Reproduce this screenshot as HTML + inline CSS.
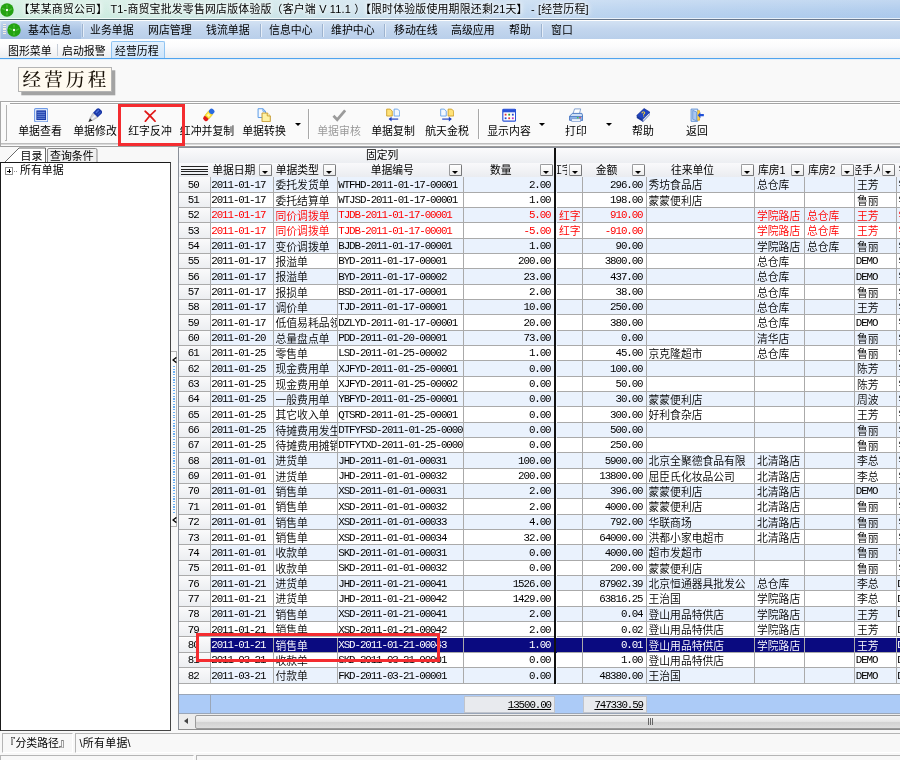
<!DOCTYPE html>
<html lang="zh-CN">
<head>
<meta charset="utf-8">
<title>经营历程</title>
<style>
*{box-sizing:border-box;margin:0;padding:0}
html,body{width:900px;height:760px;overflow:hidden}
html{background:#f8f8f8}
body{will-change:transform}
body{position:relative;background:#f8f8f8;font-family:"Liberation Sans","Noto Sans CJK SC",sans-serif;font-size:10.8px;color:#000;line-height:1}
.abs{position:absolute}
/* title bar */
#title{left:0;top:0;width:900px;height:19.5px;background:linear-gradient(180deg,rgba(255,255,255,.3) 0,rgba(255,255,255,.12) 50%,rgba(255,255,255,0) 100%),linear-gradient(90deg,#cdeedd 0,#cbe8e2 22%,#c8def0 45%,#b4cfee 70%,#a8c7eb 100%)}
#title .txt{position:absolute;left:18.5px;top:4px;white-space:nowrap;font-size:10.9px;letter-spacing:0.2px;text-shadow:0 0 4px #fff,0 0 6px rgba(255,255,255,.9),0 0 8px rgba(255,255,255,.7)}
#titleline{left:0;top:19px;width:900px;height:1px;background:linear-gradient(90deg,#3d5a58,#5d6f86 40%,#6b7a90);box-shadow:0 -1px 0 rgba(255,255,255,.7),0 1px 0 rgba(255,255,255,.8)}
/* menu */
#menu{left:0;top:20.5px;width:900px;height:18.5px;background:linear-gradient(180deg,#d3e2f3 0,#c3d6ee 45%,#b9cfea 100%)}
#menu .first{position:absolute;left:1px;top:0;width:80px;height:19px;background:linear-gradient(180deg,#c5d8ef 0,#a9c3e4 50%,#9dbae0 100%);border-radius:2px}
#menu span.mi{position:absolute;top:4.5px;white-space:nowrap;font-size:10.9px}
#menu i.sep{position:absolute;top:3px;width:1px;height:13px;background:#9db3cf;box-shadow:1px 0 0 #e6eef8}
/* tabs */
#tabs{left:0;top:39px;width:900px;height:20px;background:linear-gradient(180deg,#ffffff 0,#fbfbfc 40%,#eaecef 100%)}
#tabs span.t{position:absolute;top:7px;white-space:nowrap;font-size:10.9px}
#tabs .act{position:absolute;left:111px;top:2px;width:54px;height:18px;background:linear-gradient(180deg,#e4f1fd,#cbe3fa);border:1px solid #8fc4f2;border-bottom:none;border-radius:2px 2px 0 0}
#tabs i.sep{position:absolute;top:5px;width:1px;height:12px;background:#c5ccd6}
#tabline{left:0;top:58px;width:900px;height:1px;background:#4fa3ee;box-shadow:0 1px 0 #e4f0fb}
#white{left:0;top:59.5px;width:900px;height:41px;background:#f9f9f9}
/* heading label */
#hd{left:18px;top:67px;width:94px;height:24.5px;background:#fffaf0;border:1px solid #b4b4b4;box-shadow:3.3px 3.3px 0 #a3a3a3;font-family:"Liberation Serif","Noto Serif CJK SC",serif;font-weight:500;font-size:18.5px;letter-spacing:3.25px;white-space:nowrap;padding:2px 0 0 3.5px;line-height:20px;color:#1a1208}
/* toolbar */
#tb{left:0;top:101px;width:900px;height:45.5px;background:#fafafa;border-top:1px solid #a8a8a8;border-left:1px solid #a8a8a8;border-bottom:1px solid #9c9c9c;box-shadow:inset 0 1px 0 #fff}
#tbin{left:10px;top:103px;width:890px;height:1px;background:#a4a4a4;box-shadow:0 1px 0 #fff}
#tbbot{left:1px;top:143px;width:900px;height:1px;background:#bdbdbd;box-shadow:0 1px 0 #d9d9d9}
#grip{left:4.5px;top:105px;width:2.5px;height:36px;border-right:1.5px solid #b0b0b0;border-bottom:1px solid #b0b0b0}
.btn{position:absolute;top:105px;width:60px;height:38px;text-align:center;white-space:nowrap}
.btn svg{position:absolute;left:50%;top:2.5px;margin-left:-7.2px;width:14.4px;height:14.4px}
.btn em{position:absolute;left:-10px;right:-10px;top:20.5px;font-style:normal;font-size:10.9px;text-align:center}
.btn.dis em{color:#9a9a9a}
.tsep{position:absolute;top:109px;width:1px;height:30px;background:#a8a8a8;box-shadow:1px 0 0 #fff}
.arr{position:absolute;top:122.5px;width:0;height:0;border-left:3px solid transparent;border-right:3px solid transparent;border-top:3px solid #000}
#redbox1{left:118.25px;top:103.75px;width:66.75px;height:41.75px;border:3px solid #f42c30}
/* left panel */
#ltab1{left:18px;top:147px;width:29px;height:15px}
#lt1{left:20.5px;top:151px;font-size:10.9px}
#lt2{left:50px;top:151px;font-size:10.9px}
#tree{left:0;top:161.5px;width:170.5px;height:569px;background:#fff;border:1px solid #1a1a1a;border-right:1px solid #444;border-bottom:1px solid #444}
#plus{left:5px;top:167px;width:8px;height:8px;border:1px solid #909090;background:#fff}
#plus:before{content:"";position:absolute;left:1px;top:2.5px;width:4px;height:1px;background:#000}
#plus:after{content:"";position:absolute;left:2.5px;top:1px;width:1px;height:4px;background:#000}
#treetxt{left:20px;top:165.2px;font-size:10.9px}
/* splitter */
.sp{position:absolute;left:172px;font-size:9px;font-weight:bold;font-family:"Liberation Sans",sans-serif}
#spbtn{left:170.5px;top:350.5px;width:6.5px;height:176px;background:#fbfbfb;border-top:1px solid #b4b4b4;border-right:1px solid #b4b4b4;border-bottom:1px solid #b4b4b4}
#spbtn .dots{position:absolute;left:2.5px;top:14px;width:2px;height:148.5px;background:repeating-linear-gradient(180deg,#6ab0f5 0,#6ab0f5 1.2px,transparent 1.2px,transparent 2.7px)}
/* grid */
#grid{left:178px;top:147px;width:722px;height:583px;background:#fff;overflow:hidden;border-top:1px solid #8a8f98;border-left:1px solid #8a8f98;border-bottom:1px solid #8c8c8c}
#gh1{position:absolute;left:0;top:0;width:722px;height:15px;background:linear-gradient(180deg,#fbfbfc,#eceef2)}
#gh2{position:absolute;left:0;top:15px;width:722px;height:15px;background:linear-gradient(180deg,#f9f9fb,#e9ebef)}
#gh1 .fix{position:absolute;left:187px;top:1.5px;font-size:10.8px}
.h{position:absolute;top:15px;height:15px;font-size:10.8px;white-space:nowrap;overflow:hidden}
.h b{font-weight:normal;position:absolute;top:0;left:0;right:16.5px;height:15px;overflow:hidden;display:flex;justify-content:center}
.h b u{text-decoration:none;flex:none;padding-top:1.5px}
.h i.dd{position:absolute;right:1.5px;top:1px;width:13px;height:11.5px;border:1px solid #9a9b9d;border-right-color:#77787a;border-bottom-color:#77787a;border-radius:1.5px;background:linear-gradient(180deg,#ffffff,#ececec)}
.h i.dd:after{content:"";position:absolute;left:2.2px;top:6px;border-left:3.25px solid transparent;border-right:3.25px solid transparent;border-top:3.5px solid #000}
.h i.bars{position:absolute;left:2px;top:2.5px;width:27px;height:9px;background:repeating-linear-gradient(180deg,#222 0,#222 1.2px,transparent 1.2px,transparent 2.5px)}
.r{position:absolute;left:0;width:760px;height:15.34px;background:#fff}
.r.alt{background:#eaf2fd}
.r.red{color:#ff0000}
.r.sel{background:#0a0a80;color:#fff}
.c{position:absolute;top:0;height:15.34px;border-right:1px solid #aaa;border-bottom:1px solid #aaa;white-space:nowrap;overflow:hidden;padding:2px 0 0 2px;font-family:"Noto Sans CJK SC",sans-serif;font-weight:350;font-size:10.8px;line-height:11px}
.c.m{font-family:"Liberation Mono",monospace;letter-spacing:-1.08px;padding-top:2.4px;padding-left:0.8px}
.c.num{text-align:right;padding-right:3px}
.c.rn{text-align:center;background:linear-gradient(180deg,#fafafb,#eceef1);color:#000;padding-left:0;padding-right:2px}
#thick{position:absolute;left:375px;top:0;width:2px;height:535.5px;background:#111}
#foot{position:absolute;left:0;top:546px;width:722px;height:20px;background:#accbf7;border-top:1px solid #9aa6b8;border-bottom:1px solid #9aa6b8}
#foot .fb{position:absolute;top:1px;height:17px;background:#e8eaee;border:1px solid #c0c4cc;font-family:"Liberation Mono",monospace;letter-spacing:-1.08px;font-size:10.8px;text-align:right;padding:3px 3px 0 0;text-decoration:underline}
#foot i{position:absolute;top:0;width:1px;height:19px;background:#9aa6b8}
#hs{position:absolute;left:0;top:566px;width:722px;height:15px;background:#ececec}
#hs .thumb{position:absolute;left:16px;top:1px;width:720px;height:14px;border:1px solid #9a9a9a;border-radius:2px;background:linear-gradient(180deg,#f4f4f4 0,#e6e6e6 45%,#d2d2d2 55%,#dedede 100%)}
#hs .la{position:absolute;left:5px;top:4px;border-top:3.5px solid transparent;border-bottom:3.5px solid transparent;border-right:4px solid #444}
#hs .gr{position:absolute;left:469px;top:4px;width:5px;height:7px;background:repeating-linear-gradient(90deg,#666 0,#666 1px,transparent 1px,transparent 2px)}
#redbox2{left:196px;top:633px;width:244px;height:29px;border:3px solid #f42c30}
/* status */
#st1{left:2px;top:732.5px;width:71px;height:20px;border:1px solid #fff;border-left-color:#b5b5b5;border-top-color:#b5b5b5;background:#f8f8f8}
#st2{left:75px;top:732.5px;width:830px;height:20px;border:1px solid #fff;border-left-color:#b5b5b5;border-top-color:#b5b5b5;background:#f8f8f8}
#st1 span,#st2 span{position:absolute;top:4.5px;font-size:10.9px;white-space:nowrap}
#sb1{left:0;top:754.5px;width:194px;height:8px;border:1px solid #b5b5b5;border-right-color:#fff;background:#f8f8f8}
#sb2{left:196px;top:754.5px;width:710px;height:8px;border:1px solid #b5b5b5;background:#f8f8f8}
</style>
</head>
<body>
<div id="title" class="abs">
<svg class="abs" style="left:0.3px;top:3px" width="14" height="14" viewBox="0 0 14 14"><circle cx="7" cy="7" r="6.7" fill="#24a212"/><g stroke="#48c034" stroke-width="1.3" stroke-linecap="round"><line x1="7" y1="2.2" x2="7" y2="4.2"/><line x1="7" y1="9.8" x2="7" y2="11.8"/><line x1="2.6" y1="5.6" x2="4.6" y2="6.6"/><line x1="9.4" y1="7.4" x2="11.4" y2="6"/></g><circle cx="7" cy="7" r="1.2" fill="#f4fff0"/></svg>
<span class="txt">【某某商贸公司】 T1-商贸宝批发零售网店版体验版（客户端 V 11.1 ）【限时体验版使用期限还剩21天】 - [经营历程]</span>
</div>
<div id="titleline" class="abs"></div>
<div id="menu" class="abs">
<div class="first"></div>
<svg class="abs" style="left:7.3px;top:2px" width="14" height="14" viewBox="0 0 14 14"><circle cx="7" cy="7" r="6.7" fill="#24a212"/><g stroke="#48c034" stroke-width="1.3" stroke-linecap="round"><line x1="7" y1="2.2" x2="7" y2="4.2"/><line x1="7" y1="9.8" x2="7" y2="11.8"/><line x1="2.6" y1="5.6" x2="4.6" y2="6.6"/><line x1="9.4" y1="7.4" x2="11.4" y2="6"/></g><circle cx="7" cy="7" r="1.2" fill="#f4fff0"/></svg>
<i class="abs" style="left:3px;top:3.5px;width:2.5px;height:11px;background:repeating-linear-gradient(180deg,#f3efe6 0,#f3efe6 1.3px,#a9bfdc 1.3px,#a9bfdc 2.2px)"></i>
<span class="mi" style="left:28px">基本信息</span>
<span class="mi" style="left:90px">业务单据</span>
<span class="mi" style="left:148px">网店管理</span>
<span class="mi" style="left:206px">钱流单据</span>
<span class="mi" style="left:269px">信息中心</span>
<span class="mi" style="left:331px">维护中心</span>
<span class="mi" style="left:394px">移动在线</span>
<span class="mi" style="left:451px">高级应用</span>
<span class="mi" style="left:509px">帮助</span>
<span class="mi" style="left:551px">窗口</span>
<i class="sep" style="left:82px"></i><i class="sep" style="left:260px"></i><i class="sep" style="left:322px"></i><i class="sep" style="left:384px"></i><i class="sep" style="left:541px"></i>
</div>
<div id="tabs" class="abs">
<div class="act"></div>
<span class="t" style="left:8px">图形菜单</span><i class="sep" style="left:57px"></i>
<span class="t" style="left:62px">启动报警</span>
<span class="t" style="left:115px">经营历程</span>
</div>
<div id="tabline" class="abs"></div>
<div id="white" class="abs"></div>
<div id="hd" class="abs">经营历程</div>

<div id="tb" class="abs"></div>
<div id="tbin" class="abs"></div>
<div id="tbbot" class="abs"></div>
<div id="grip" class="abs"></div>
<!--BTNS--><div class="btn" style="left:10px"><svg viewBox="0 0 16 16" style="margin-left:-6.4px"><rect x="0.7" y="0.7" width="14.6" height="14.6" rx="1.2" fill="#f4f8ff" stroke="#6f9ae6" stroke-width="1.3"/><rect x="2.6" y="2.6" width="10.8" height="10.8" fill="#1a3aa8"/><g stroke="#7f9fe8" stroke-width="0.9"><line x1="3.6" y1="4.8" x2="12.4" y2="4.8"/><line x1="3.6" y1="7" x2="12.4" y2="7"/><line x1="3.6" y1="9.2" x2="12.4" y2="9.2"/><line x1="3.6" y1="11.4" x2="12.4" y2="11.4"/></g></svg><em>单据查看</em></div>
<div class="btn" style="left:65px"><svg viewBox="0 0 16 16"><path d="M0.4 15.8 L2.2 11.2 L5 13.8 Z" fill="#2a2a2a"/><path d="M2.2 11.2 L5.6 5.4 L10.8 10.4 L5 13.8 Z" fill="#d4d4d8" stroke="#8c8c96" stroke-width="0.5"/><path d="M3.4 12.2 L7.6 7.4 L9 8.8 L4.4 13.2 Z" fill="#f4f4f6"/><path d="M5.6 5.4 L9.8 0.9 Q11.4 -0.4 13.2 1 L15.2 3 Q16.6 4.8 15 6.4 L10.8 10.4 Z" fill="#1936a6"/><path d="M8.2 4.8 L11.4 1.6 L12.6 2.8 L9.4 6 Z" fill="#4a6fd8"/><path d="M10.4 7 L13.6 3.8 L14.4 4.6 L11.2 7.8 Z" fill="#3558c4"/></svg><em>单据修改</em></div>
<div class="btn" style="left:120px"><svg viewBox="0 0 16 16"><path d="M2.4 3.6 Q7 7.4 13.4 14.8" stroke="#e01818" stroke-width="1.9" stroke-linecap="round" fill="none"/><path d="M13.6 3 Q7.6 8 2.6 14.8" stroke="#e01818" stroke-width="1.9" stroke-linecap="round" fill="none"/></svg><em>红字反冲</em></div>
<div class="btn" style="left:177px"><svg viewBox="0 0 16 16" style="margin-left:-5.4px"><g transform="rotate(-50 8 8) translate(0 0.4) scale(1 0.88)"><rect x="0.2" y="4.6" width="5.6" height="6.8" rx="2.6" fill="#e01818"/><rect x="4.6" y="4.6" width="6.6" height="6.8" fill="#ffe53a" stroke="#c9a800" stroke-width="0.5"/><rect x="10.2" y="4.6" width="5.6" height="6.8" rx="2.6" fill="#2a6ae0"/><rect x="6.2" y="6.4" width="2.6" height="3.2" fill="#fff8b0"/></g></svg><em>红冲并复制</em></div>
<div class="btn" style="left:234px"><svg viewBox="0 0 16 16"><path d="M1.2 0.8 H6.6 L9.4 3.6 V10.6 H1.2 Z" fill="#f4f9ff" stroke="#5b9be6" stroke-width="1.1"/><path d="M6.6 0.8 V3.6 H9.4" fill="none" stroke="#5b9be6" stroke-width="1"/><path d="M5.6 5.6 H11.4 L14.8 8.8 V15.2 H5.6 Z" fill="#fff2a4" stroke="#c49a34" stroke-width="1.1"/><path d="M11.4 5.6 V8.8 H14.8" fill="#fff6c8" stroke="#c89a20" stroke-width="1"/></svg><em>单据转换</em></div>
<div class="btn dis" style="left:309px"><svg viewBox="0 0 16 16"><path d="M1.6 8.6 L5.8 13 L14.6 2.6" stroke="#9b9b9b" stroke-width="3" fill="none" stroke-linejoin="miter"/></svg><em>单据审核</em></div>
<div class="btn" style="left:363px"><svg viewBox="0 0 17 16"><path d="M0.8 0.8 H5 L7.4 3.2 V9 H0.8 Z" fill="#ffe27a" stroke="#c89a20" stroke-width="1"/><path d="M9.6 0.8 H13.8 L16.2 3.2 V9 H9.6 Z" fill="#f4f9ff" stroke="#5b9be6" stroke-width="1"/><path d="M14.4 12.6 H4.6" stroke="#1c3fc0" stroke-width="1.4" fill="none"/><path d="M6.6 9.8 L3 12.6 L6.6 15.4 Z" fill="#1c3fc0"/></svg><em>单据复制</em></div>
<div class="btn" style="left:417px"><svg viewBox="0 0 17 16"><path d="M0.8 0.8 H5 L7.4 3.2 V9 H0.8 Z" fill="#f4f9ff" stroke="#5b9be6" stroke-width="1"/><path d="M9.6 0.8 H13.8 L16.2 3.2 V9 H9.6 Z" fill="#ffe27a" stroke="#c89a20" stroke-width="1"/><path d="M2.6 12.6 H12.4" stroke="#1c3fc0" stroke-width="1.4" fill="none"/><path d="M10.4 9.8 L14 12.6 L10.4 15.4 Z" fill="#1c3fc0"/></svg><em>航天金税</em></div>
<div class="btn" style="left:479px"><svg viewBox="0 0 16 16"><rect x="0.9" y="1.4" width="14.2" height="13.2" rx="1" fill="#fff" stroke="#2a52d8" stroke-width="1.3"/><rect x="0.9" y="1.4" width="14.2" height="3.4" fill="#2a52d8"/><g><rect x="3" y="6.4" width="2" height="2" fill="#d33"/><rect x="7" y="6.4" width="2" height="2" fill="#2a9a2a"/><rect x="11" y="6.4" width="2" height="2" fill="#24c"/><rect x="3" y="10.4" width="2" height="2" fill="#24c"/><rect x="7" y="10.4" width="2" height="2" fill="#d33"/><rect x="11" y="10.4" width="2" height="2" fill="#b3b"/></g></svg><em>显示内容</em></div>
<div class="btn" style="left:546px"><svg viewBox="0 0 16 16"><path d="M4.4 6.4 L6.2 1 H13 L11.6 6.4 Z" fill="#fff" stroke="#6b8fc9" stroke-width="0.9"/><path d="M0.8 9 L3.6 6 H14.4 L15.2 9 V13.4 H0.8 Z" fill="#cfe0f6" stroke="#4a78c2" stroke-width="1"/><rect x="0.8" y="9.4" width="14.4" height="4.2" fill="#8fb2e6" stroke="#4a78c2" stroke-width="0.9"/><rect x="3" y="12" width="10" height="3" fill="#eef4fc" stroke="#6b8fc9" stroke-width="0.7"/><rect x="11.4" y="10.2" width="1.8" height="1.2" fill="#e33"/><rect x="8.8" y="10.2" width="1.8" height="1.2" fill="#3c3"/></svg><em>打印</em></div>
<div class="btn" style="left:613px"><svg viewBox="0 0 16 16"><path d="M0.8 8.4 L9 0.6 L15.4 4.6 L7.6 12.6 Z" fill="#1f44c4" stroke="#0f2a8a" stroke-width="0.8"/><path d="M0.8 8.4 V11 L7.6 15.4 V12.6 Z" fill="#16349c"/><path d="M7.6 12.6 L15.4 4.6 V7.2 L7.6 15.4 Z" fill="#dfe6f6" stroke="#0f2a8a" stroke-width="0.6"/><text x="6.2" y="9.6" font-family="Liberation Sans,sans-serif" font-size="8" font-weight="bold" fill="#ffd92a" transform="rotate(-8 8 8)">?</text></svg><em>帮助</em></div>
<div class="btn" style="left:667px"><svg viewBox="0 0 16 16"><path d="M1.2 1.2 H8.6 V14.8 H1.2 Z" fill="#dce9fb" stroke="#5588d0" stroke-width="1"/><path d="M3 2.6 L7.4 4.4 V14.2 L3 12.6 Z" fill="#a9c6f0" stroke="#5588d0" stroke-width="0.8"/><path d="M8.2 3 H10.6 V13.6 H8.2" fill="#ffcf40" stroke="#d89a10" stroke-width="0.7"/><path d="M15.4 6.8 H11.6 V4.6 L8.6 8 L11.6 11.4 V9.2 H15.4 Z" fill="#1f50d8"/></svg><em>返回</em></div>
<i class="arr" style="left:295px"></i><i class="arr" style="left:539px"></i><i class="arr" style="left:606px"></i>
<i class="tsep" style="left:308px"></i><i class="tsep" style="left:477.5px"></i>
<!--/BTNS-->
<div id="redbox1" class="abs"></div>

<svg class="abs" style="left:0;top:146px" width="110" height="17" viewBox="0 0 110 17"><path d="M47.5 16.5 V4 Q47.5 2.5 49 2.5 H95.5 Q97 2.5 97 4 V16.5 Z" fill="#f0f0f0" stroke="#8a8a8a" stroke-width="1"/><path d="M5 16 L19 2 H45.5 V16.5 Z" fill="#fff"/><path d="M5 16 L19 2 H45.5 V16.5" fill="none" stroke="#6a6a6a" stroke-width="1"/></svg>
<div id="lt1" class="abs">目录</div>
<div id="lt2" class="abs">查询条件</div>
<div id="tree" class="abs"></div>
<div id="plus" class="abs"></div>
<i class="abs" style="left:14px;top:171px;width:4px;height:1px;background:repeating-linear-gradient(90deg,#909090 0,#909090 1px,transparent 1px,transparent 2px)"></i>
<div id="treetxt" class="abs">所有单据</div>
<div id="spbtn" class="abs"><svg class="abs" style="left:1px;top:5px" width="5" height="6" viewBox="0 0 5 6"><path d="M4.4 0.4 L1 3 L4.4 5.6" fill="none" stroke="#000" stroke-width="1.3"/></svg><i class="dots"></i><svg class="abs" style="left:1px;top:165px" width="5" height="6" viewBox="0 0 5 6"><path d="M4.4 0.4 L1 3 L4.4 5.6" fill="none" stroke="#000" stroke-width="1.3"/></svg></div>

<div id="grid" class="abs">
<div id="gh1"><span class="fix">固定列</span></div>
<div id="gh2"></div>
<span class="h" style="left:0.0px;width:31.5px"><i class="bars"></i></span>
<span class="h" style="left:31.5px;width:63.0px"><b><u>单据日期</u></b><i class="dd"></i></span>
<span class="h" style="left:94.5px;width:64.0px"><b><u>单据类型</u></b><i class="dd"></i></span>
<span class="h" style="left:158.5px;width:126.0px"><b><u>单据编号</u></b><i class="dd"></i></span>
<span class="h" style="left:284.5px;width:91.0px"><b><u>数量</u></b><i class="dd"></i></span>
<span class="h" style="left:378.0px;width:26.0px"><b><u>红字</u></b><i class="dd"></i></span>
<span class="h" style="left:404.0px;width:63.5px"><b><u>金额</u></b><i class="dd"></i></span>
<span class="h" style="left:467.5px;width:108.5px"><b><u>往来单位</u></b><i class="dd"></i></span>
<span class="h" style="left:576.0px;width:50.0px"><b><u>库房1</u></b><i class="dd"></i></span>
<span class="h" style="left:626.0px;width:50.0px"><b><u>库房2</u></b><i class="dd"></i></span>
<span class="h" style="left:676.0px;width:41.5px"><b><u>经手人</u></b><i class="dd"></i></span>
<span class="h" style="left:717.5px;width:64.0px"><b><u>销售部门</u></b><i class="dd"></i></span>
<div class="r alt" style="top:29.30px">
<span class="c rn m" style="left:0.0px;width:31.5px">50</span>
<span class="c m" style="left:31.5px;width:63.0px">2011-01-17</span>
<span class="c" style="left:94.5px;width:64.0px">委托发货单</span>
<span class="c m" style="left:158.5px;width:126.0px">WTFHD-2011-01-17-00001</span>
<span class="c num m" style="left:284.5px;width:91.0px">2.00</span>
<span class="c" style="left:378.0px;width:26.0px"></span>
<span class="c num m" style="left:404.0px;width:63.5px">296.00</span>
<span class="c" style="left:467.5px;width:108.5px">秀坊食品店</span>
<span class="c" style="left:576.0px;width:50.0px">总仓库</span>
<span class="c" style="left:626.0px;width:50.0px"></span>
<span class="c" style="left:676.0px;width:41.5px">王芳</span>
<span class="c" style="left:717.5px;width:64.0px">销</span>
</div>
<div class="r" style="top:44.64px">
<span class="c rn m" style="left:0.0px;width:31.5px">51</span>
<span class="c m" style="left:31.5px;width:63.0px">2011-01-17</span>
<span class="c" style="left:94.5px;width:64.0px">委托结算单</span>
<span class="c m" style="left:158.5px;width:126.0px">WTJSD-2011-01-17-00001</span>
<span class="c num m" style="left:284.5px;width:91.0px">1.00</span>
<span class="c" style="left:378.0px;width:26.0px"></span>
<span class="c num m" style="left:404.0px;width:63.5px">198.00</span>
<span class="c" style="left:467.5px;width:108.5px">蒙蒙便利店</span>
<span class="c" style="left:576.0px;width:50.0px"></span>
<span class="c" style="left:626.0px;width:50.0px"></span>
<span class="c" style="left:676.0px;width:41.5px">鲁丽</span>
<span class="c" style="left:717.5px;width:64.0px">销</span>
</div>
<div class="r alt red" style="top:59.98px">
<span class="c rn m" style="left:0.0px;width:31.5px">52</span>
<span class="c m" style="left:31.5px;width:63.0px">2011-01-17</span>
<span class="c" style="left:94.5px;width:64.0px">同价调拨单</span>
<span class="c m" style="left:158.5px;width:126.0px">TJDB-2011-01-17-00001</span>
<span class="c num m" style="left:284.5px;width:91.0px">5.00</span>
<span class="c" style="left:378.0px;width:26.0px">红字</span>
<span class="c num m" style="left:404.0px;width:63.5px">910.00</span>
<span class="c" style="left:467.5px;width:108.5px"></span>
<span class="c" style="left:576.0px;width:50.0px">学院路店</span>
<span class="c" style="left:626.0px;width:50.0px">总仓库</span>
<span class="c" style="left:676.0px;width:41.5px">王芳</span>
<span class="c" style="left:717.5px;width:64.0px">销</span>
</div>
<div class="r red" style="top:75.32px">
<span class="c rn m" style="left:0.0px;width:31.5px">53</span>
<span class="c m" style="left:31.5px;width:63.0px">2011-01-17</span>
<span class="c" style="left:94.5px;width:64.0px">同价调拨单</span>
<span class="c m" style="left:158.5px;width:126.0px">TJDB-2011-01-17-00001</span>
<span class="c num m" style="left:284.5px;width:91.0px">-5.00</span>
<span class="c" style="left:378.0px;width:26.0px">红字</span>
<span class="c num m" style="left:404.0px;width:63.5px">-910.00</span>
<span class="c" style="left:467.5px;width:108.5px"></span>
<span class="c" style="left:576.0px;width:50.0px">学院路店</span>
<span class="c" style="left:626.0px;width:50.0px">总仓库</span>
<span class="c" style="left:676.0px;width:41.5px">王芳</span>
<span class="c" style="left:717.5px;width:64.0px">销</span>
</div>
<div class="r alt" style="top:90.66px">
<span class="c rn m" style="left:0.0px;width:31.5px">54</span>
<span class="c m" style="left:31.5px;width:63.0px">2011-01-17</span>
<span class="c" style="left:94.5px;width:64.0px">变价调拨单</span>
<span class="c m" style="left:158.5px;width:126.0px">BJDB-2011-01-17-00001</span>
<span class="c num m" style="left:284.5px;width:91.0px">1.00</span>
<span class="c" style="left:378.0px;width:26.0px"></span>
<span class="c num m" style="left:404.0px;width:63.5px">90.00</span>
<span class="c" style="left:467.5px;width:108.5px"></span>
<span class="c" style="left:576.0px;width:50.0px">学院路店</span>
<span class="c" style="left:626.0px;width:50.0px">总仓库</span>
<span class="c" style="left:676.0px;width:41.5px">鲁丽</span>
<span class="c" style="left:717.5px;width:64.0px">销</span>
</div>
<div class="r" style="top:106.00px">
<span class="c rn m" style="left:0.0px;width:31.5px">55</span>
<span class="c m" style="left:31.5px;width:63.0px">2011-01-17</span>
<span class="c" style="left:94.5px;width:64.0px">报溢单</span>
<span class="c m" style="left:158.5px;width:126.0px">BYD-2011-01-17-00001</span>
<span class="c num m" style="left:284.5px;width:91.0px">200.00</span>
<span class="c" style="left:378.0px;width:26.0px"></span>
<span class="c num m" style="left:404.0px;width:63.5px">3800.00</span>
<span class="c" style="left:467.5px;width:108.5px"></span>
<span class="c" style="left:576.0px;width:50.0px">总仓库</span>
<span class="c" style="left:626.0px;width:50.0px"></span>
<span class="c m" style="left:676.0px;width:41.5px">DEMO</span>
<span class="c" style="left:717.5px;width:64.0px">销</span>
</div>
<div class="r alt" style="top:121.34px">
<span class="c rn m" style="left:0.0px;width:31.5px">56</span>
<span class="c m" style="left:31.5px;width:63.0px">2011-01-17</span>
<span class="c" style="left:94.5px;width:64.0px">报溢单</span>
<span class="c m" style="left:158.5px;width:126.0px">BYD-2011-01-17-00002</span>
<span class="c num m" style="left:284.5px;width:91.0px">23.00</span>
<span class="c" style="left:378.0px;width:26.0px"></span>
<span class="c num m" style="left:404.0px;width:63.5px">437.00</span>
<span class="c" style="left:467.5px;width:108.5px"></span>
<span class="c" style="left:576.0px;width:50.0px">总仓库</span>
<span class="c" style="left:626.0px;width:50.0px"></span>
<span class="c m" style="left:676.0px;width:41.5px">DEMO</span>
<span class="c" style="left:717.5px;width:64.0px">销</span>
</div>
<div class="r" style="top:136.68px">
<span class="c rn m" style="left:0.0px;width:31.5px">57</span>
<span class="c m" style="left:31.5px;width:63.0px">2011-01-17</span>
<span class="c" style="left:94.5px;width:64.0px">报损单</span>
<span class="c m" style="left:158.5px;width:126.0px">BSD-2011-01-17-00001</span>
<span class="c num m" style="left:284.5px;width:91.0px">2.00</span>
<span class="c" style="left:378.0px;width:26.0px"></span>
<span class="c num m" style="left:404.0px;width:63.5px">38.00</span>
<span class="c" style="left:467.5px;width:108.5px"></span>
<span class="c" style="left:576.0px;width:50.0px">总仓库</span>
<span class="c" style="left:626.0px;width:50.0px"></span>
<span class="c" style="left:676.0px;width:41.5px">鲁丽</span>
<span class="c" style="left:717.5px;width:64.0px">销</span>
</div>
<div class="r alt" style="top:152.02px">
<span class="c rn m" style="left:0.0px;width:31.5px">58</span>
<span class="c m" style="left:31.5px;width:63.0px">2011-01-17</span>
<span class="c" style="left:94.5px;width:64.0px">调价单</span>
<span class="c m" style="left:158.5px;width:126.0px">TJD-2011-01-17-00001</span>
<span class="c num m" style="left:284.5px;width:91.0px">10.00</span>
<span class="c" style="left:378.0px;width:26.0px"></span>
<span class="c num m" style="left:404.0px;width:63.5px">250.00</span>
<span class="c" style="left:467.5px;width:108.5px"></span>
<span class="c" style="left:576.0px;width:50.0px">总仓库</span>
<span class="c" style="left:626.0px;width:50.0px"></span>
<span class="c" style="left:676.0px;width:41.5px">王芳</span>
<span class="c" style="left:717.5px;width:64.0px">销</span>
</div>
<div class="r" style="top:167.36px">
<span class="c rn m" style="left:0.0px;width:31.5px">59</span>
<span class="c m" style="left:31.5px;width:63.0px">2011-01-17</span>
<span class="c" style="left:94.5px;width:64.0px">低值易耗品领用单</span>
<span class="c m" style="left:158.5px;width:126.0px">DZLYD-2011-01-17-00001</span>
<span class="c num m" style="left:284.5px;width:91.0px">20.00</span>
<span class="c" style="left:378.0px;width:26.0px"></span>
<span class="c num m" style="left:404.0px;width:63.5px">380.00</span>
<span class="c" style="left:467.5px;width:108.5px"></span>
<span class="c" style="left:576.0px;width:50.0px">总仓库</span>
<span class="c" style="left:626.0px;width:50.0px"></span>
<span class="c m" style="left:676.0px;width:41.5px">DEMO</span>
<span class="c" style="left:717.5px;width:64.0px">销</span>
</div>
<div class="r alt" style="top:182.70px">
<span class="c rn m" style="left:0.0px;width:31.5px">60</span>
<span class="c m" style="left:31.5px;width:63.0px">2011-01-20</span>
<span class="c" style="left:94.5px;width:64.0px">总量盘点单</span>
<span class="c m" style="left:158.5px;width:126.0px">PDD-2011-01-20-00001</span>
<span class="c num m" style="left:284.5px;width:91.0px">73.00</span>
<span class="c" style="left:378.0px;width:26.0px"></span>
<span class="c num m" style="left:404.0px;width:63.5px">0.00</span>
<span class="c" style="left:467.5px;width:108.5px"></span>
<span class="c" style="left:576.0px;width:50.0px">清华店</span>
<span class="c" style="left:626.0px;width:50.0px"></span>
<span class="c" style="left:676.0px;width:41.5px">鲁丽</span>
<span class="c" style="left:717.5px;width:64.0px">销</span>
</div>
<div class="r" style="top:198.04px">
<span class="c rn m" style="left:0.0px;width:31.5px">61</span>
<span class="c m" style="left:31.5px;width:63.0px">2011-01-25</span>
<span class="c" style="left:94.5px;width:64.0px">零售单</span>
<span class="c m" style="left:158.5px;width:126.0px">LSD-2011-01-25-00002</span>
<span class="c num m" style="left:284.5px;width:91.0px">1.00</span>
<span class="c" style="left:378.0px;width:26.0px"></span>
<span class="c num m" style="left:404.0px;width:63.5px">45.00</span>
<span class="c" style="left:467.5px;width:108.5px">京克隆超市</span>
<span class="c" style="left:576.0px;width:50.0px">总仓库</span>
<span class="c" style="left:626.0px;width:50.0px"></span>
<span class="c" style="left:676.0px;width:41.5px">鲁丽</span>
<span class="c" style="left:717.5px;width:64.0px">销</span>
</div>
<div class="r alt" style="top:213.38px">
<span class="c rn m" style="left:0.0px;width:31.5px">62</span>
<span class="c m" style="left:31.5px;width:63.0px">2011-01-25</span>
<span class="c" style="left:94.5px;width:64.0px">现金费用单</span>
<span class="c m" style="left:158.5px;width:126.0px">XJFYD-2011-01-25-00001</span>
<span class="c num m" style="left:284.5px;width:91.0px">0.00</span>
<span class="c" style="left:378.0px;width:26.0px"></span>
<span class="c num m" style="left:404.0px;width:63.5px">100.00</span>
<span class="c" style="left:467.5px;width:108.5px"></span>
<span class="c" style="left:576.0px;width:50.0px"></span>
<span class="c" style="left:626.0px;width:50.0px"></span>
<span class="c" style="left:676.0px;width:41.5px">陈芳</span>
<span class="c" style="left:717.5px;width:64.0px">销</span>
</div>
<div class="r" style="top:228.72px">
<span class="c rn m" style="left:0.0px;width:31.5px">63</span>
<span class="c m" style="left:31.5px;width:63.0px">2011-01-25</span>
<span class="c" style="left:94.5px;width:64.0px">现金费用单</span>
<span class="c m" style="left:158.5px;width:126.0px">XJFYD-2011-01-25-00002</span>
<span class="c num m" style="left:284.5px;width:91.0px">0.00</span>
<span class="c" style="left:378.0px;width:26.0px"></span>
<span class="c num m" style="left:404.0px;width:63.5px">50.00</span>
<span class="c" style="left:467.5px;width:108.5px"></span>
<span class="c" style="left:576.0px;width:50.0px"></span>
<span class="c" style="left:626.0px;width:50.0px"></span>
<span class="c" style="left:676.0px;width:41.5px">陈芳</span>
<span class="c" style="left:717.5px;width:64.0px">销</span>
</div>
<div class="r alt" style="top:244.06px">
<span class="c rn m" style="left:0.0px;width:31.5px">64</span>
<span class="c m" style="left:31.5px;width:63.0px">2011-01-25</span>
<span class="c" style="left:94.5px;width:64.0px">一般费用单</span>
<span class="c m" style="left:158.5px;width:126.0px">YBFYD-2011-01-25-00001</span>
<span class="c num m" style="left:284.5px;width:91.0px">0.00</span>
<span class="c" style="left:378.0px;width:26.0px"></span>
<span class="c num m" style="left:404.0px;width:63.5px">30.00</span>
<span class="c" style="left:467.5px;width:108.5px">蒙蒙便利店</span>
<span class="c" style="left:576.0px;width:50.0px"></span>
<span class="c" style="left:626.0px;width:50.0px"></span>
<span class="c" style="left:676.0px;width:41.5px">周波</span>
<span class="c" style="left:717.5px;width:64.0px">销</span>
</div>
<div class="r" style="top:259.40px">
<span class="c rn m" style="left:0.0px;width:31.5px">65</span>
<span class="c m" style="left:31.5px;width:63.0px">2011-01-25</span>
<span class="c" style="left:94.5px;width:64.0px">其它收入单</span>
<span class="c m" style="left:158.5px;width:126.0px">QTSRD-2011-01-25-00001</span>
<span class="c num m" style="left:284.5px;width:91.0px">0.00</span>
<span class="c" style="left:378.0px;width:26.0px"></span>
<span class="c num m" style="left:404.0px;width:63.5px">300.00</span>
<span class="c" style="left:467.5px;width:108.5px">好利食杂店</span>
<span class="c" style="left:576.0px;width:50.0px"></span>
<span class="c" style="left:626.0px;width:50.0px"></span>
<span class="c" style="left:676.0px;width:41.5px">王芳</span>
<span class="c" style="left:717.5px;width:64.0px">销</span>
</div>
<div class="r alt" style="top:274.74px">
<span class="c rn m" style="left:0.0px;width:31.5px">66</span>
<span class="c m" style="left:31.5px;width:63.0px">2011-01-25</span>
<span class="c" style="left:94.5px;width:64.0px">待摊费用发生单</span>
<span class="c m" style="left:158.5px;width:126.0px">DTFYFSD-2011-01-25-00001</span>
<span class="c num m" style="left:284.5px;width:91.0px">0.00</span>
<span class="c" style="left:378.0px;width:26.0px"></span>
<span class="c num m" style="left:404.0px;width:63.5px">500.00</span>
<span class="c" style="left:467.5px;width:108.5px"></span>
<span class="c" style="left:576.0px;width:50.0px"></span>
<span class="c" style="left:626.0px;width:50.0px"></span>
<span class="c" style="left:676.0px;width:41.5px">鲁丽</span>
<span class="c" style="left:717.5px;width:64.0px">销</span>
</div>
<div class="r" style="top:290.08px">
<span class="c rn m" style="left:0.0px;width:31.5px">67</span>
<span class="c m" style="left:31.5px;width:63.0px">2011-01-25</span>
<span class="c" style="left:94.5px;width:64.0px">待摊费用摊销单</span>
<span class="c m" style="left:158.5px;width:126.0px">DTFYTXD-2011-01-25-00001</span>
<span class="c num m" style="left:284.5px;width:91.0px">0.00</span>
<span class="c" style="left:378.0px;width:26.0px"></span>
<span class="c num m" style="left:404.0px;width:63.5px">250.00</span>
<span class="c" style="left:467.5px;width:108.5px"></span>
<span class="c" style="left:576.0px;width:50.0px"></span>
<span class="c" style="left:626.0px;width:50.0px"></span>
<span class="c" style="left:676.0px;width:41.5px">鲁丽</span>
<span class="c" style="left:717.5px;width:64.0px">销</span>
</div>
<div class="r alt" style="top:305.42px">
<span class="c rn m" style="left:0.0px;width:31.5px">68</span>
<span class="c m" style="left:31.5px;width:63.0px">2011-01-01</span>
<span class="c" style="left:94.5px;width:64.0px">进货单</span>
<span class="c m" style="left:158.5px;width:126.0px">JHD-2011-01-01-00031</span>
<span class="c num m" style="left:284.5px;width:91.0px">100.00</span>
<span class="c" style="left:378.0px;width:26.0px"></span>
<span class="c num m" style="left:404.0px;width:63.5px">5900.00</span>
<span class="c" style="left:467.5px;width:108.5px">北京全聚德食品有限</span>
<span class="c" style="left:576.0px;width:50.0px">北清路店</span>
<span class="c" style="left:626.0px;width:50.0px"></span>
<span class="c" style="left:676.0px;width:41.5px">李总</span>
<span class="c" style="left:717.5px;width:64.0px">销</span>
</div>
<div class="r" style="top:320.76px">
<span class="c rn m" style="left:0.0px;width:31.5px">69</span>
<span class="c m" style="left:31.5px;width:63.0px">2011-01-01</span>
<span class="c" style="left:94.5px;width:64.0px">进货单</span>
<span class="c m" style="left:158.5px;width:126.0px">JHD-2011-01-01-00032</span>
<span class="c num m" style="left:284.5px;width:91.0px">200.00</span>
<span class="c" style="left:378.0px;width:26.0px"></span>
<span class="c num m" style="left:404.0px;width:63.5px">13800.00</span>
<span class="c" style="left:467.5px;width:108.5px">屈臣氏化妆品公司</span>
<span class="c" style="left:576.0px;width:50.0px">北清路店</span>
<span class="c" style="left:626.0px;width:50.0px"></span>
<span class="c" style="left:676.0px;width:41.5px">李总</span>
<span class="c" style="left:717.5px;width:64.0px">销</span>
</div>
<div class="r alt" style="top:336.10px">
<span class="c rn m" style="left:0.0px;width:31.5px">70</span>
<span class="c m" style="left:31.5px;width:63.0px">2011-01-01</span>
<span class="c" style="left:94.5px;width:64.0px">销售单</span>
<span class="c m" style="left:158.5px;width:126.0px">XSD-2011-01-01-00031</span>
<span class="c num m" style="left:284.5px;width:91.0px">2.00</span>
<span class="c" style="left:378.0px;width:26.0px"></span>
<span class="c num m" style="left:404.0px;width:63.5px">396.00</span>
<span class="c" style="left:467.5px;width:108.5px">蒙蒙便利店</span>
<span class="c" style="left:576.0px;width:50.0px">北清路店</span>
<span class="c" style="left:626.0px;width:50.0px"></span>
<span class="c m" style="left:676.0px;width:41.5px">DEMO</span>
<span class="c" style="left:717.5px;width:64.0px">销</span>
</div>
<div class="r" style="top:351.44px">
<span class="c rn m" style="left:0.0px;width:31.5px">71</span>
<span class="c m" style="left:31.5px;width:63.0px">2011-01-01</span>
<span class="c" style="left:94.5px;width:64.0px">销售单</span>
<span class="c m" style="left:158.5px;width:126.0px">XSD-2011-01-01-00032</span>
<span class="c num m" style="left:284.5px;width:91.0px">2.00</span>
<span class="c" style="left:378.0px;width:26.0px"></span>
<span class="c num m" style="left:404.0px;width:63.5px">4000.00</span>
<span class="c" style="left:467.5px;width:108.5px">蒙蒙便利店</span>
<span class="c" style="left:576.0px;width:50.0px">北清路店</span>
<span class="c" style="left:626.0px;width:50.0px"></span>
<span class="c" style="left:676.0px;width:41.5px">鲁丽</span>
<span class="c" style="left:717.5px;width:64.0px">销</span>
</div>
<div class="r alt" style="top:366.78px">
<span class="c rn m" style="left:0.0px;width:31.5px">72</span>
<span class="c m" style="left:31.5px;width:63.0px">2011-01-01</span>
<span class="c" style="left:94.5px;width:64.0px">销售单</span>
<span class="c m" style="left:158.5px;width:126.0px">XSD-2011-01-01-00033</span>
<span class="c num m" style="left:284.5px;width:91.0px">4.00</span>
<span class="c" style="left:378.0px;width:26.0px"></span>
<span class="c num m" style="left:404.0px;width:63.5px">792.00</span>
<span class="c" style="left:467.5px;width:108.5px">华联商场</span>
<span class="c" style="left:576.0px;width:50.0px">北清路店</span>
<span class="c" style="left:626.0px;width:50.0px"></span>
<span class="c" style="left:676.0px;width:41.5px">鲁丽</span>
<span class="c" style="left:717.5px;width:64.0px">销</span>
</div>
<div class="r" style="top:382.12px">
<span class="c rn m" style="left:0.0px;width:31.5px">73</span>
<span class="c m" style="left:31.5px;width:63.0px">2011-01-01</span>
<span class="c" style="left:94.5px;width:64.0px">销售单</span>
<span class="c m" style="left:158.5px;width:126.0px">XSD-2011-01-01-00034</span>
<span class="c num m" style="left:284.5px;width:91.0px">32.00</span>
<span class="c" style="left:378.0px;width:26.0px"></span>
<span class="c num m" style="left:404.0px;width:63.5px">64000.00</span>
<span class="c" style="left:467.5px;width:108.5px">洪都小家电超市</span>
<span class="c" style="left:576.0px;width:50.0px">北清路店</span>
<span class="c" style="left:626.0px;width:50.0px"></span>
<span class="c" style="left:676.0px;width:41.5px">鲁丽</span>
<span class="c" style="left:717.5px;width:64.0px">销</span>
</div>
<div class="r alt" style="top:397.46px">
<span class="c rn m" style="left:0.0px;width:31.5px">74</span>
<span class="c m" style="left:31.5px;width:63.0px">2011-01-01</span>
<span class="c" style="left:94.5px;width:64.0px">收款单</span>
<span class="c m" style="left:158.5px;width:126.0px">SKD-2011-01-01-00031</span>
<span class="c num m" style="left:284.5px;width:91.0px">0.00</span>
<span class="c" style="left:378.0px;width:26.0px"></span>
<span class="c num m" style="left:404.0px;width:63.5px">4000.00</span>
<span class="c" style="left:467.5px;width:108.5px">超市发超市</span>
<span class="c" style="left:576.0px;width:50.0px"></span>
<span class="c" style="left:626.0px;width:50.0px"></span>
<span class="c" style="left:676.0px;width:41.5px">鲁丽</span>
<span class="c" style="left:717.5px;width:64.0px">销</span>
</div>
<div class="r" style="top:412.80px">
<span class="c rn m" style="left:0.0px;width:31.5px">75</span>
<span class="c m" style="left:31.5px;width:63.0px">2011-01-01</span>
<span class="c" style="left:94.5px;width:64.0px">收款单</span>
<span class="c m" style="left:158.5px;width:126.0px">SKD-2011-01-01-00032</span>
<span class="c num m" style="left:284.5px;width:91.0px">0.00</span>
<span class="c" style="left:378.0px;width:26.0px"></span>
<span class="c num m" style="left:404.0px;width:63.5px">200.00</span>
<span class="c" style="left:467.5px;width:108.5px">蒙蒙便利店</span>
<span class="c" style="left:576.0px;width:50.0px"></span>
<span class="c" style="left:626.0px;width:50.0px"></span>
<span class="c" style="left:676.0px;width:41.5px">鲁丽</span>
<span class="c" style="left:717.5px;width:64.0px">销</span>
</div>
<div class="r alt" style="top:428.14px">
<span class="c rn m" style="left:0.0px;width:31.5px">76</span>
<span class="c m" style="left:31.5px;width:63.0px">2011-01-21</span>
<span class="c" style="left:94.5px;width:64.0px">进货单</span>
<span class="c m" style="left:158.5px;width:126.0px">JHD-2011-01-21-00041</span>
<span class="c num m" style="left:284.5px;width:91.0px">1526.00</span>
<span class="c" style="left:378.0px;width:26.0px"></span>
<span class="c num m" style="left:404.0px;width:63.5px">87902.39</span>
<span class="c" style="left:467.5px;width:108.5px">北京恒通器具批发公</span>
<span class="c" style="left:576.0px;width:50.0px">总仓库</span>
<span class="c" style="left:626.0px;width:50.0px"></span>
<span class="c" style="left:676.0px;width:41.5px">李总</span>
<span class="c m" style="left:717.5px;width:64.0px">DEMO</span>
</div>
<div class="r" style="top:443.48px">
<span class="c rn m" style="left:0.0px;width:31.5px">77</span>
<span class="c m" style="left:31.5px;width:63.0px">2011-01-21</span>
<span class="c" style="left:94.5px;width:64.0px">进货单</span>
<span class="c m" style="left:158.5px;width:126.0px">JHD-2011-01-21-00042</span>
<span class="c num m" style="left:284.5px;width:91.0px">1429.00</span>
<span class="c" style="left:378.0px;width:26.0px"></span>
<span class="c num m" style="left:404.0px;width:63.5px">63816.25</span>
<span class="c" style="left:467.5px;width:108.5px">王治国</span>
<span class="c" style="left:576.0px;width:50.0px">学院路店</span>
<span class="c" style="left:626.0px;width:50.0px"></span>
<span class="c" style="left:676.0px;width:41.5px">李总</span>
<span class="c m" style="left:717.5px;width:64.0px">DEMO</span>
</div>
<div class="r alt" style="top:458.82px">
<span class="c rn m" style="left:0.0px;width:31.5px">78</span>
<span class="c m" style="left:31.5px;width:63.0px">2011-01-21</span>
<span class="c" style="left:94.5px;width:64.0px">销售单</span>
<span class="c m" style="left:158.5px;width:126.0px">XSD-2011-01-21-00041</span>
<span class="c num m" style="left:284.5px;width:91.0px">2.00</span>
<span class="c" style="left:378.0px;width:26.0px"></span>
<span class="c num m" style="left:404.0px;width:63.5px">0.04</span>
<span class="c" style="left:467.5px;width:108.5px">登山用品特供店</span>
<span class="c" style="left:576.0px;width:50.0px">学院路店</span>
<span class="c" style="left:626.0px;width:50.0px"></span>
<span class="c" style="left:676.0px;width:41.5px">王芳</span>
<span class="c m" style="left:717.5px;width:64.0px">DEMO</span>
</div>
<div class="r" style="top:474.16px">
<span class="c rn m" style="left:0.0px;width:31.5px">79</span>
<span class="c m" style="left:31.5px;width:63.0px">2011-01-21</span>
<span class="c" style="left:94.5px;width:64.0px">销售单</span>
<span class="c m" style="left:158.5px;width:126.0px">XSD-2011-01-21-00042</span>
<span class="c num m" style="left:284.5px;width:91.0px">2.00</span>
<span class="c" style="left:378.0px;width:26.0px"></span>
<span class="c num m" style="left:404.0px;width:63.5px">0.02</span>
<span class="c" style="left:467.5px;width:108.5px">登山用品特供店</span>
<span class="c" style="left:576.0px;width:50.0px">学院路店</span>
<span class="c" style="left:626.0px;width:50.0px"></span>
<span class="c" style="left:676.0px;width:41.5px">王芳</span>
<span class="c m" style="left:717.5px;width:64.0px">DEMO</span>
</div>
<div class="r alt sel" style="top:489.50px">
<span class="c rn m" style="left:0.0px;width:31.5px">80</span>
<span class="c m" style="left:31.5px;width:63.0px">2011-01-21</span>
<span class="c" style="left:94.5px;width:64.0px">销售单</span>
<span class="c m" style="left:158.5px;width:126.0px">XSD-2011-01-21-00043</span>
<span class="c num m" style="left:284.5px;width:91.0px">1.00</span>
<span class="c" style="left:378.0px;width:26.0px"></span>
<span class="c num m" style="left:404.0px;width:63.5px">0.01</span>
<span class="c" style="left:467.5px;width:108.5px">登山用品特供店</span>
<span class="c" style="left:576.0px;width:50.0px">学院路店</span>
<span class="c" style="left:626.0px;width:50.0px"></span>
<span class="c" style="left:676.0px;width:41.5px">王芳</span>
<span class="c m" style="left:717.5px;width:64.0px">DEMO</span>
</div>
<div class="r" style="top:504.84px">
<span class="c rn m" style="left:0.0px;width:31.5px">81</span>
<span class="c m" style="left:31.5px;width:63.0px">2011-03-21</span>
<span class="c" style="left:94.5px;width:64.0px">收款单</span>
<span class="c m" style="left:158.5px;width:126.0px">SKD-2011-03-21-00001</span>
<span class="c num m" style="left:284.5px;width:91.0px">0.00</span>
<span class="c" style="left:378.0px;width:26.0px"></span>
<span class="c num m" style="left:404.0px;width:63.5px">1.00</span>
<span class="c" style="left:467.5px;width:108.5px">登山用品特供店</span>
<span class="c" style="left:576.0px;width:50.0px"></span>
<span class="c" style="left:626.0px;width:50.0px"></span>
<span class="c m" style="left:676.0px;width:41.5px">DEMO</span>
<span class="c m" style="left:717.5px;width:64.0px">DEMO</span>
</div>
<div class="r alt" style="top:520.18px">
<span class="c rn m" style="left:0.0px;width:31.5px">82</span>
<span class="c m" style="left:31.5px;width:63.0px">2011-03-21</span>
<span class="c" style="left:94.5px;width:64.0px">付款单</span>
<span class="c m" style="left:158.5px;width:126.0px">FKD-2011-03-21-00001</span>
<span class="c num m" style="left:284.5px;width:91.0px">0.00</span>
<span class="c" style="left:378.0px;width:26.0px"></span>
<span class="c num m" style="left:404.0px;width:63.5px">48380.00</span>
<span class="c" style="left:467.5px;width:108.5px">王治国</span>
<span class="c" style="left:576.0px;width:50.0px"></span>
<span class="c" style="left:626.0px;width:50.0px"></span>
<span class="c m" style="left:676.0px;width:41.5px">DEMO</span>
<span class="c m" style="left:717.5px;width:64.0px">DEMO</span>
</div>
<div id="thick"></div>
<div id="foot"><i style="left:31px"></i><div class="fb" style="left:285px;width:91px">13500.00</div><div class="fb" style="left:404px;width:64px">747330.59</div></div>
<div id="hs"><div class="thumb"></div><i class="la"></i><i class="gr"></i></div>
</div>
<div id="redbox2" class="abs"></div>

<div id="st1" class="abs"><span style="left:1.5px">『分类路径』</span></div>
<div id="st2" class="abs"><span style="left:3.5px;letter-spacing:0.3px">\所有单据\</span></div>
<div id="sb1" class="abs"></div>
<div id="sb2" class="abs"></div>
</body>
</html>
